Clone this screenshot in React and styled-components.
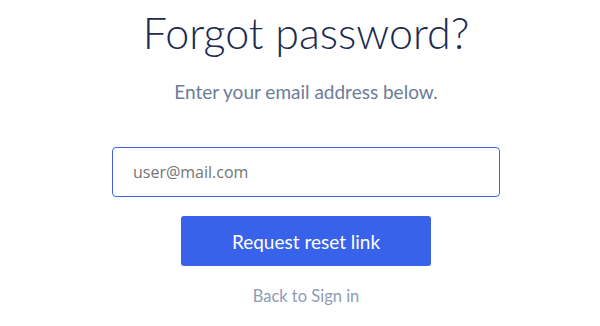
import React from 'react';
import styled, { createGlobalStyle } from 'styled-components';

const GlobalStyle = createGlobalStyle`
	html, body {
		margin: 0;
		padding: 0;
		background: #ffffff;
	}
	body {
		font-family: 'Lato', 'Noto Sans', sans-serif;
	}
`;

const Page = styled.main`
	display: flex;
	flex-direction: column;
	align-items: center;
	width: 600px;
	height: 326px;
	padding: 4px 0 0 12px;
	box-sizing: border-box;
`;

const Title = styled.h1`
	margin: 0;
	font-family: 'Lato', sans-serif;
	font-weight: 300;
	font-size: 43px;
	line-height: 58px;
	color: #1c2b4f;
`;

const Subtitle = styled.p`
	margin: 18px 0 0;
	font-family: 'Lato', sans-serif;
	font-size: 19px;
	line-height: 24px;
	color: #6d7c99;
`;

const Form = styled.form`
	display: flex;
	flex-direction: column;
	align-items: center;
	margin-top: 43px;
`;

const Input = styled.input`
	width: 388px;
	height: 50px;
	box-sizing: border-box;
	padding: 0 20px;
	border: 1px solid #3a63e6;
	border-radius: 4px;
	font-family: 'Open Sans', sans-serif;
	font-size: 16px;
	color: #333;
	outline: none;
	&::placeholder {
		color: #757575;
	}
`;

const Button = styled.button`
	margin-top: 19px;
	width: 250px;
	height: 50px;
	border: none;
	border-radius: 3px;
	background: #3762e9;
	color: #ffffff;
	font-family: 'Lato', sans-serif;
	font-size: 19px;
	cursor: pointer;
`;

const BackLink = styled.a`
	margin-top: 19px;
	font-family: 'Lato', sans-serif;
	font-size: 16.5px;
	line-height: 22px;
	color: #8e9bb3;
	text-decoration: none;
`;

const App = () => (
	<>
		<GlobalStyle />
		<Page>
			<Title>Forgot password?</Title>
			<Subtitle>Enter your email address below.</Subtitle>
			<Form onSubmit={(e) => e.preventDefault()}>
				<Input type="email" placeholder="user@mail.com" />
				<Button type="submit">Request reset link</Button>
				<BackLink href="#">Back to Sign in</BackLink>
			</Form>
		</Page>
	</>
);

export default App;
